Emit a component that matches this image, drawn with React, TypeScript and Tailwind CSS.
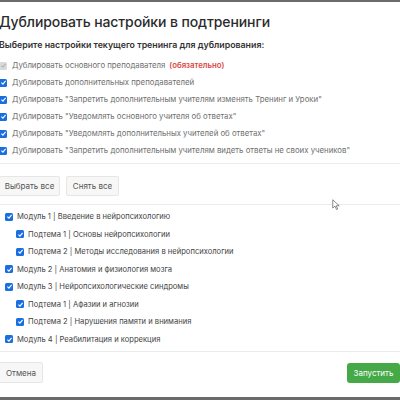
import React from "react";

const settings = [
  { label: "Дублировать основного преподавателя", required: true },
  { label: "Дублировать дополнительных преподавателей" },
  { label: "Дублировать \"Запретить дополнительным учителям изменять Тренинг и Уроки\"" },
  { label: "Дублировать \"Уведомлять основного учителя об ответах\"" },
  { label: "Дублировать \"Уведомлять дополнительных учителей об ответах\"" },
  { label: "Дублировать \"Запретить дополнительным учителям видеть ответы не своих учеников\"" },
];

const tree = [
  { label: "Модуль 1 | Введение в нейропсихологию", sub: false },
  { label: "Подтема 1 | Основы нейропсихологии", sub: true },
  { label: "Подтема 2 | Методы исследования в нейропсихологии", sub: true },
  { label: "Модуль 2 | Анатомия и физиология мозга", sub: false },
  { label: "Модуль 3 | Нейропсихологические синдромы", sub: false },
  { label: "Подтема 1 | Афазии и агнозии", sub: true },
  { label: "Подтема 2 | Нарушения памяти и внимания", sub: true },
  { label: "Модуль 4 | Реабилитация и коррекция", sub: false },
];

function Check({ disabled }: { disabled?: boolean }) {
  return (
    <span
      className={
        "flex h-[8px] w-[8px] shrink-0 items-center justify-center rounded-[1.5px] " +
        (disabled ? "bg-[#dadada]" : "bg-[#1a6fe0]")
      }
    >
      <svg viewBox="0 0 10 10" className="h-[7px] w-[7px]">
        <path
          d="M2 5.2 L4.2 7.3 L8 2.8"
          fill="none"
          stroke={disabled ? "#b5b5b5" : "white"}
          strokeWidth="1.6"
        />
      </svg>
    </span>
  );
}

export default function App() {
  return (
    <div
      className="relative flex h-[400px] w-[400px] flex-col overflow-hidden bg-[#6b6b6b] text-[#333]"
      style={{ fontFamily: "Inter, 'Noto Sans', sans-serif" }}
    >
      <div className="mt-[2px] mb-[3px] -ml-[1px] flex flex-1 flex-col bg-white">
        <div className="pt-[12px] text-[14px] font-medium leading-[16px] tracking-[-0.1px] text-[#2b2b2b]">
          Дублировать настройки в подтренинги
        </div>
        <div className="mt-[8px] text-[8.8px] font-semibold leading-[14px] text-[#333]">
          Выберите настройки текущего тренинга для дублирования:
        </div>
        <div className="mt-[5px] flex flex-col">
          {settings.map((s, i) => (
            <div key={i} className="flex h-[17px] items-center gap-[5px] whitespace-nowrap">
              <Check disabled={s.required} />
              <span className="text-[7.8px] text-[#6f6f6f]">
                {s.label}
                {s.required && (
                  <span className="ml-[4px] font-semibold text-[#d9463e]">(обязательно)</span>
                )}
              </span>
            </div>
          ))}
        </div>
        <div className="mt-[4px] h-px bg-[#ececec]" />
        <div className="flex gap-[6px] pt-[12px] pb-[8px]">
          <button className="h-[20px] w-[61px] rounded-[2px] border border-[#e6e6e6] bg-[#f7f7f7] text-[8px] text-[#555]">
            Выбрать все
          </button>
          <button className="h-[20px] w-[53px] rounded-[2px] border border-[#e6e6e6] bg-[#f7f7f7] text-[8px] text-[#555]">
            Снять все
          </button>
        </div>
        <div className="h-px bg-[#ececec]" />
        <div className="mt-[3px] flex flex-col">
          {tree.map((t, i) => (
            <div
              key={i}
              className={
                "flex h-[17.5px] items-center gap-[4px] whitespace-nowrap " +
                (t.sub ? "pl-[17px]" : "pl-[6px]")
              }
            >
              <Check />
              <span className="text-[7.6px] text-[#444]">{t.label}</span>
            </div>
          ))}
        </div>
        <div className="mt-[3px] h-px bg-[#ececec]" />
        <div className="flex items-center justify-between pt-[10px]">
          <button className="h-[21px] w-[44px] rounded-[2px] border border-[#e6e6e6] bg-[#f7f7f7] text-[8px] text-[#555]">
            Отмена
          </button>
          <button className="h-[20px] w-[53px] rounded-[3px] bg-[#45a948] text-[8px] text-white">
            Запустить
          </button>
        </div>
      </div>
      <svg viewBox="0 0 12 16" className="absolute left-[332px] top-[199px] h-[12px] w-[9px]">
        <path d="M1 1 L1 12 L4 9.5 L6 14 L7.6 13.3 L5.7 9 L9.5 9 Z" fill="white" stroke="#555" strokeWidth="0.9" />
      </svg>
    </div>
  );
}
